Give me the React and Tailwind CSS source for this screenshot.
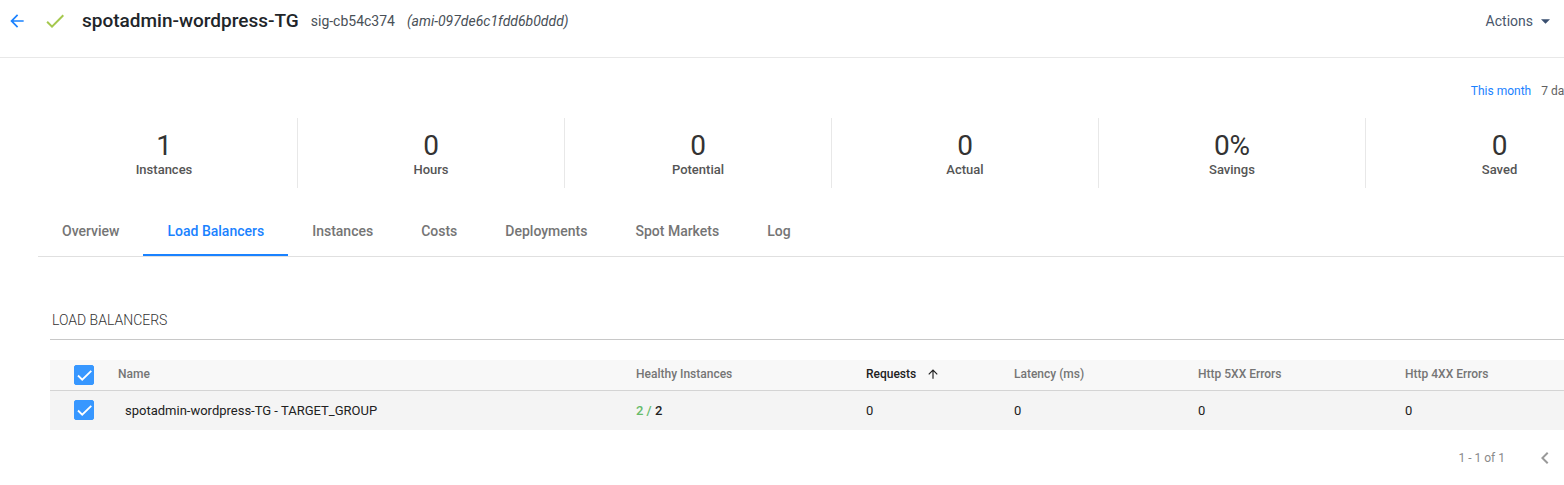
import React, { useState } from "react";

const STATS = [
  { value: "1", label: "Instances" },
  { value: "0", label: "Hours" },
  { value: "0", label: "Potential" },
  { value: "0", label: "Actual" },
  { value: "0%", label: "Savings" },
  { value: "0", label: "Saved" },
];

const TABS = ["Overview", "Load Balancers", "Instances", "Costs", "Deployments", "Spot Markets", "Log"];

function Icon({ d, className }) {
  return (
    <svg viewBox="0 0 24 24" fill="currentColor" aria-hidden="true" className={className}>
      <path d={d} />
    </svg>
  );
}

const ARROW_BACK = "M20 11H7.83l5.59-5.59L12 4l-8 8 8 8 1.41-1.41L7.83 13H20v-2z";
const ARROW_UP = "M4 12l1.41 1.41L11 7.83V20h2V7.83l5.58 5.59L20 12l-8-8-8 8z";
const CHECK = "M9 16.17L4.83 12l-1.42 1.41L9 19 21 7l-1.41-1.41z";
const CHEVRON_LEFT = "M15.41 7.41L14 6l-6 6 6 6 1.41-1.41L10.83 12z";

function Checkbox({ label }) {
  const [checked, setChecked] = useState(true);
  return (
    <label className="grid h-5 w-5">
      <input
        type="checkbox"
        aria-label={label}
        checked={checked}
        onChange={(e) => setChecked(e.target.checked)}
        className="col-start-1 row-start-1 h-5 w-5 appearance-none rounded-xs border border-gray-400 bg-white checked:border-[#3797ff] checked:bg-[#3797ff]"
      />
      {checked && (
        <svg viewBox="0 0 20 20" fill="none" aria-hidden="true" className="pointer-events-none col-start-1 row-start-1 h-5 w-5">
          <path d="M4 10.5l4.2 4.2L17.3 5.8" stroke="#fff" strokeWidth="1.8" />
        </svg>
      )}
    </label>
  );
}

export default function App() {
  const [active, setActive] = useState("Load Balancers");
  return (
    <div className="overflow-hidden bg-white font-['Roboto',sans-serif] text-[#212529]">
      <header className="flex h-[58px] items-start border-b border-[#e8e8e8] pl-[7px] pr-[14px]">
        <div className="flex h-[42px] flex-1 items-center">
          <a href="#back" aria-label="Back" className="text-[#1a82ff]">
            <Icon d={ARROW_BACK} className="h-5 w-5" />
          </a>
          <Icon d={CHECK} className="ml-4 h-6 w-6 text-[#a5c84e]" />
          <div className="ml-[15px] flex items-center gap-3">
            <h1 className="text-[19px] font-medium leading-6">spotadmin-wordpress-TG</h1>
            <span className="text-sm text-[#495057]">sig-cb54c374</span>
            <span className="text-sm italic text-[#495057]">(ami-097de6c1fdd6b0ddd)</span>
          </div>
        </div>
        <button type="button" className="flex h-[42px] items-center gap-2 text-sm text-[#48566b]">
          Actions
          <svg viewBox="0 0 10 5" aria-hidden="true" className="h-[5px] w-[9px]">
            <path d="M0 0h10L5 5z" fill="#3a4f70" />
          </svg>
        </button>
      </header>

      <nav aria-label="Period" className="-mr-3 flex justify-end gap-[10px] pt-6 text-xs leading-[18px]">
        <button type="button" className="text-[#1a82ff]">This month</button>
        <button type="button" className="whitespace-nowrap text-[#616161]">7 days</button>
      </nav>

      <section className="-mr-[69px] ml-[31px] mt-[18px] grid grid-cols-6">
        {STATS.map((s) => (
          <div key={s.label} className="flex h-[70px] flex-col items-center border-r border-[#e8e8e8] pt-3 last:border-r-0">
            <div className="text-[28px] leading-8 text-[#333]">{s.value}</div>
            <div className="text-[13px] font-medium leading-4 text-[#555]">{s.label}</div>
          </div>
        ))}
      </section>

      <div role="tablist" className="ml-[38px] mt-[18px] flex h-[51px] border-b border-[#e0e0e0]">
        {TABS.map((t) => (
          <button
            key={t}
            type="button"
            role="tab"
            aria-selected={t === active}
            onClick={() => setActive(t)}
            className={
              t === active
                ? "border-b-2 border-[#1a82ff] px-6 pt-[2px] text-sm font-medium text-[#1a82ff]"
                : "border-b-2 border-transparent px-6 pt-[2px] text-sm font-medium text-[#757575]"
            }
          >
            {t}
          </button>
        ))}
      </div>

      <main className="ml-[50px]">
        <h2 className="mt-[52px] border-b border-[#c8c8c8] pb-2 pl-[2px] text-sm font-light leading-[22px] text-[#333]">
          LOAD BALANCERS
        </h2>
        <table className="mt-5 w-full table-fixed border-collapse text-left">
          <colgroup>
            <col className="w-[68px]" />
            <col />
            <col className="w-[230px]" />
            <col className="w-[148px]" />
            <col className="w-[184px]" />
            <col className="w-[207px]" />
            <col className="w-[159px]" />
          </colgroup>
          <thead>
            <tr className="h-[30px] border-b border-[#d4d4d4] bg-[#f8f8f8] text-xs text-[#757575]">
              <th className="p-0 pl-6"><Checkbox label="Select all load balancers" /></th>
              <th className="p-0 pb-[2px] font-medium">Name</th>
              <th className="p-0 pb-[2px] font-medium">Healthy Instances</th>
              <th aria-sort="ascending" className="p-0 pb-[2px] font-medium text-[#212121]">
                <button type="button" className="flex items-center gap-[10px]">
                  Requests
                  <Icon d={ARROW_UP} className="h-[14px] w-[14px]" />
                </button>
              </th>
              <th className="p-0 pb-[2px] font-medium">Latency (ms)</th>
              <th className="p-0 pb-[2px] font-medium">Http 5XX Errors</th>
              <th className="p-0 pb-[2px] font-medium">Http 4XX Errors</th>
            </tr>
          </thead>
          <tbody>
            <tr className="h-10 bg-[#f4f4f4] text-[13px] text-[#212121]">
              <td className="p-0 pl-6"><Checkbox label="Select spotadmin-wordpress-TG" /></td>
              <td className="p-0 pl-[7px]">spotadmin-wordpress-TG - TARGET_GROUP</td>
              <td className="p-0 font-medium"><span className="text-[#66bb6a]">2 / </span>2</td>
              <td className="p-0">0</td>
              <td className="p-0">0</td>
              <td className="p-0">0</td>
              <td className="p-0">0</td>
            </tr>
          </tbody>
        </table>
        <div className="flex h-14 items-center justify-end gap-7 pr-[7px] text-xs text-[#8a8a8a]">
          <span>1 - 1 of 1</span>
          <button type="button" aria-label="Previous page">
            <Icon d={CHEVRON_LEFT} className="h-6 w-6 text-[#999]" />
          </button>
        </div>
      </main>
    </div>
  );
}
